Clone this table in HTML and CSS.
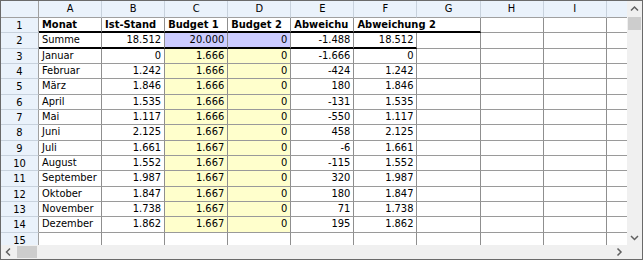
FILE: index.html
```html
<!DOCTYPE html>
<html>
<head>
<meta charset="utf-8">
<link rel="stylesheet" href="styles.css">
</head>
<body>
<div class="sheet">
  <div class="main">
    <div class="viewport">
      <div class="grid">
        <div class="corner"></div>
        <div class="ch">A</div><div class="ch">B</div><div class="ch">C</div><div class="ch">D</div><div class="ch">E</div><div class="ch">F</div><div class="ch">G</div><div class="ch">H</div><div class="ch">I</div><div class="ch"></div>

        <div class="rh">1</div>
        <div class="c b t thick">Monat</div><div class="c b t thick">Ist-Stand</div><div class="c b t thick">Budget 1</div><div class="c b t thick">Budget 2</div><div class="c b t thick">Abweichu</div><div class="c b t thick span2">Abweichung 2</div><div class="c"></div><div class="c"></div><div class="c"></div>

        <div class="rh">2</div>
        <div class="c t thick">Summe</div><div class="c n thick">18.512</div><div class="c n thick lav">20.000</div><div class="c n thick lav">0</div><div class="c n thick">-1.488</div><div class="c n thick">18.512</div><div class="c"></div><div class="c"></div><div class="c"></div><div class="c"></div>

        <div class="rh">3</div>
        <div class="c t">Januar</div><div class="c n">0</div><div class="c n yel">1.666</div><div class="c n yel">0</div><div class="c n">-1.666</div><div class="c n">0</div><div class="c"></div><div class="c"></div><div class="c"></div><div class="c"></div>

        <div class="rh">4</div>
        <div class="c t">Februar</div><div class="c n">1.242</div><div class="c n yel">1.666</div><div class="c n yel">0</div><div class="c n">-424</div><div class="c n">1.242</div><div class="c"></div><div class="c"></div><div class="c"></div><div class="c"></div>

        <div class="rh">5</div>
        <div class="c t">März</div><div class="c n">1.846</div><div class="c n yel">1.666</div><div class="c n yel">0</div><div class="c n">180</div><div class="c n">1.846</div><div class="c"></div><div class="c"></div><div class="c"></div><div class="c"></div>

        <div class="rh">6</div>
        <div class="c t">April</div><div class="c n">1.535</div><div class="c n yel">1.666</div><div class="c n yel">0</div><div class="c n">-131</div><div class="c n">1.535</div><div class="c"></div><div class="c"></div><div class="c"></div><div class="c"></div>

        <div class="rh">7</div>
        <div class="c t">Mai</div><div class="c n">1.117</div><div class="c n yel">1.666</div><div class="c n yel">0</div><div class="c n">-550</div><div class="c n">1.117</div><div class="c"></div><div class="c"></div><div class="c"></div><div class="c"></div>

        <div class="rh">8</div>
        <div class="c t">Juni</div><div class="c n">2.125</div><div class="c n yel">1.667</div><div class="c n yel">0</div><div class="c n">458</div><div class="c n">2.125</div><div class="c"></div><div class="c"></div><div class="c"></div><div class="c"></div>

        <div class="rh">9</div>
        <div class="c t">Juli</div><div class="c n">1.661</div><div class="c n yel">1.667</div><div class="c n yel">0</div><div class="c n">-6</div><div class="c n">1.661</div><div class="c"></div><div class="c"></div><div class="c"></div><div class="c"></div>

        <div class="rh">10</div>
        <div class="c t">August</div><div class="c n">1.552</div><div class="c n yel">1.667</div><div class="c n yel">0</div><div class="c n">-115</div><div class="c n">1.552</div><div class="c"></div><div class="c"></div><div class="c"></div><div class="c"></div>

        <div class="rh">11</div>
        <div class="c t">September</div><div class="c n">1.987</div><div class="c n yel">1.667</div><div class="c n yel">0</div><div class="c n">320</div><div class="c n">1.987</div><div class="c"></div><div class="c"></div><div class="c"></div><div class="c"></div>

        <div class="rh">12</div>
        <div class="c t">Oktober</div><div class="c n">1.847</div><div class="c n yel">1.667</div><div class="c n yel">0</div><div class="c n">180</div><div class="c n">1.847</div><div class="c"></div><div class="c"></div><div class="c"></div><div class="c"></div>

        <div class="rh">13</div>
        <div class="c t">November</div><div class="c n">1.738</div><div class="c n yel">1.667</div><div class="c n yel">0</div><div class="c n">71</div><div class="c n">1.738</div><div class="c"></div><div class="c"></div><div class="c"></div><div class="c"></div>

        <div class="rh">14</div>
        <div class="c t">Dezember</div><div class="c n">1.862</div><div class="c n yel">1.667</div><div class="c n yel">0</div><div class="c n">195</div><div class="c n">1.862</div><div class="c"></div><div class="c"></div><div class="c"></div><div class="c"></div>

        <div class="rh">15</div>
        <div class="c"></div><div class="c"></div><div class="c"></div><div class="c"></div><div class="c"></div><div class="c"></div><div class="c"></div><div class="c"></div><div class="c"></div><div class="c"></div>
      </div>
    </div>
    <div class="vscroll">
      <svg class="arrow" width="15" height="15" viewBox="0 0 15 15"><polyline points="4,9.5 7.5,6 11,9.5" fill="none" stroke="#606060" stroke-width="1.5"/></svg>
      <div class="vthumb"></div>
      <div class="vspace"></div>
      <svg class="arrow" width="15" height="15" viewBox="0 0 15 15"><polyline points="4,6 7.5,9.5 11,6" fill="none" stroke="#606060" stroke-width="1.5"/></svg>
    </div>
  </div>
  <div class="hscroll">
    <svg class="arrow" width="15" height="14" viewBox="0 0 15 14"><polyline points="9,3.5 5.5,7 9,10.5" fill="none" stroke="#606060" stroke-width="1.5"/></svg>
    <div class="hthumb"></div>
    <div class="hspace"></div>
    <svg class="arrow" width="15" height="14" viewBox="0 0 15 14"><polyline points="5.5,3.5 9,7 5.5,10.5" fill="none" stroke="#606060" stroke-width="1.5"/></svg>
    <div class="corner-box"></div>
  </div>
</div>
</body>
</html>
```

FILE: styles.css
```css
html, body {
  margin: 0;
  padding: 0;
  background: #ffffff;
}

.sheet {
  box-sizing: border-box;
  width: 643px;
  height: 260px;
  border: 1px solid #6a6a6a;
  display: flex;
  flex-direction: column;
  font-family: "DejaVu Sans Condensed", "DejaVu Sans", sans-serif;
  font-stretch: condensed;
  font-size: 11px;
  color: #000;
  overflow: hidden;
}

.main {
  display: flex;
  height: 244px;
}

.viewport {
  width: 626px;
  height: 244px;
  overflow: hidden;
  background: #ffffff;
}

.grid {
  display: grid;
  grid-template-columns: 38px repeat(10, 63.08px);
  grid-template-rows: 17px repeat(15, 15.33px);
  width: max-content;
}

.grid > div {
  box-sizing: border-box;
  overflow: hidden;
  white-space: nowrap;
}

.corner {
  background: #eaf2fb;
  border-right: 1px solid #a0a0a0;
  border-bottom: 1px solid #a0a0a0;
}

.ch {
  background: #eaf2fb;
  border-right: 1px solid #c8d2dd;
  border-bottom: 1px solid #a0a0a0;
  text-align: center;
  line-height: 16px;
}

.rh {
  background: #eaf2fb;
  border-right: 1px solid #a0a0a0;
  border-bottom: 1px solid #c8d2dd;
  text-align: center;
  line-height: 15px;
}

.c {
  border-right: 1px solid #8f8f8f;
  border-bottom: 1px solid #9a9a9a;
  line-height: 14px;
}

.t {
  text-align: left;
  padding-left: 3px;
}

.n {
  text-align: right;
  padding-right: 3px;
}

.b {
  font-weight: bold;
}

.thick {
  border-bottom: 2px solid #000;
}

.span2 {
  grid-column: span 2;
}

.lav {
  background: #ccccff;
}

.yel {
  background: #ffffcc;
}

.vscroll {
  width: 15px;
  height: 244px;
  background: #f0f0f0;
  display: flex;
  flex-direction: column;
  align-items: center;
}

.arrow {
  display: block;
  flex: none;
}

.vthumb {
  width: 13px;
  height: 13px;
  background: #cdcdcd;
  margin-top: 1px;
  flex: none;
}

.vspace {
  flex: 1;
}

.hscroll {
  height: 14px;
  background: #f0f0f0;
  display: flex;
  align-items: center;
}

.hthumb {
  width: 20px;
  height: 12px;
  background: #cdcdcd;
  margin-left: 1px;
  flex: none;
}

.hspace {
  flex: 1;
}

.corner-box {
  width: 15px;
  height: 14px;
  flex: none;
}
```
